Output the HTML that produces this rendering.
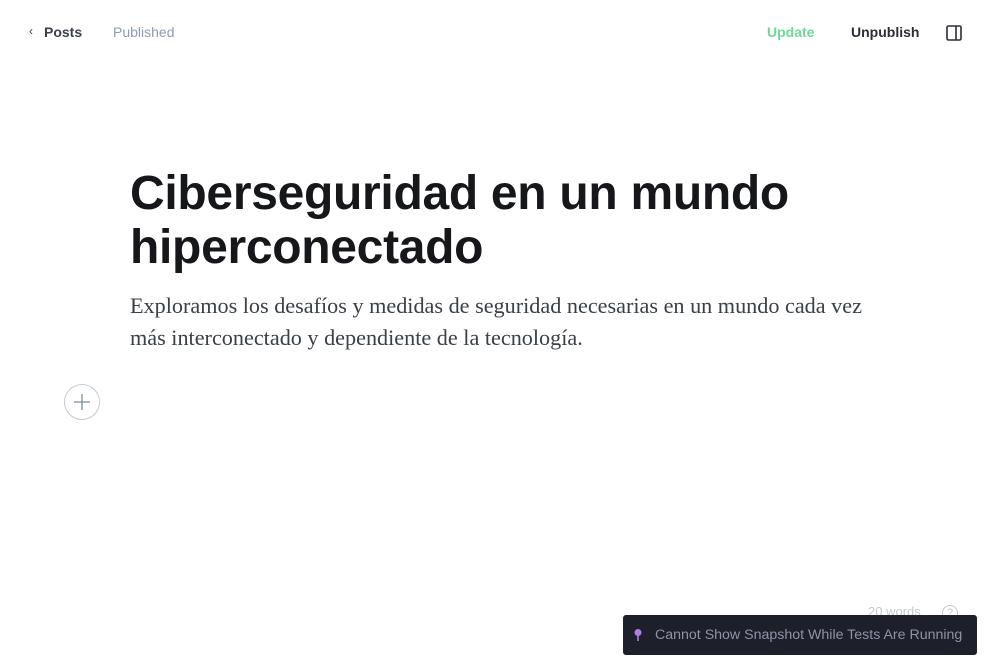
<!DOCTYPE html>
<html><head><meta charset="utf-8"><style>
*{margin:0;padding:0;box-sizing:border-box}
body{width:1000px;height:660px;background:#fff;position:relative;overflow:hidden;font-family:"Liberation Sans",sans-serif}
.t{position:absolute;font-size:14px;white-space:nowrap}
h1{position:absolute;left:130px;top:167px;font-size:48px;line-height:54px;font-weight:bold;color:#15171a;letter-spacing:-0.3px;white-space:nowrap}
.ex{position:absolute;left:130px;top:290px;width:740px;font-family:"Liberation Serif",serif;font-size:22.2px;line-height:32px;color:#394047}
.plus{position:absolute;left:64px;top:384px;width:36px;height:36px;border:1px solid #c5ccd3;border-radius:50%}
.toast{position:absolute;left:623px;top:615px;width:354px;height:40px;background:#1d1f2a;border-radius:3px;color:#8e93a6;font-size:14.2px;line-height:40px;padding-left:32px;white-space:nowrap}
</style></head><body>
<div class="t" style="left:29px;top:24px;color:#394047;font-size:12px">&#8249;</div>
<div class="t" style="left:44px;top:24px;font-weight:bold;color:#394047">Posts</div>
<div class="t" style="left:113px;top:24px;color:#8e9cb2">Published</div>
<div class="t" style="left:767px;top:24px;color:#6ed89a;font-weight:bold">Update</div>
<div class="t" style="left:851px;top:24px;color:#2a2e35;font-weight:bold">Unpublish</div>
<svg style="position:absolute;left:946px;top:25px" width="16" height="16" viewBox="0 0 16 16"><rect x="1" y="1" width="14" height="14" rx="1.5" fill="none" stroke="#2a2e35" stroke-width="1.6"/><line x1="10" y1="1" x2="10" y2="15" stroke="#2a2e35" stroke-width="1.6"/></svg>
<h1>Ciberseguridad en un mundo<br>hiperconectado</h1>
<div class="ex">Exploramos los desafíos y medidas de seguridad necesarias en un mundo cada vez<br>más interconectado y dependiente de la tecnología.</div>
<div class="plus"><svg width="36" height="36" viewBox="0 0 36 36" style="position:absolute;left:-1px;top:-1px"><path d="M18 10v16M10 18h16" stroke="#7c8b9a" stroke-width="1.3"/></svg></div>
<div class="t" style="left:868px;top:604px;color:#c3c9d0;font-size:13px">20 words</div>
<div style="position:absolute;left:942px;top:605px;width:16px;height:16px;border:1.3px solid #c3c9d0;border-radius:50%;color:#c3c9d0;font-size:11px;text-align:center;line-height:14px">?</div>
<div class="toast"><svg style="position:absolute;left:10px;top:13px" width="10" height="14" viewBox="0 0 10 14"><circle cx="5" cy="4.5" r="3.5" fill="#b17be8"/><rect x="4.2" y="7" width="1.6" height="6" fill="#b17be8"/></svg>Cannot Show Snapshot While Tests Are Running</div>
</body></html>
